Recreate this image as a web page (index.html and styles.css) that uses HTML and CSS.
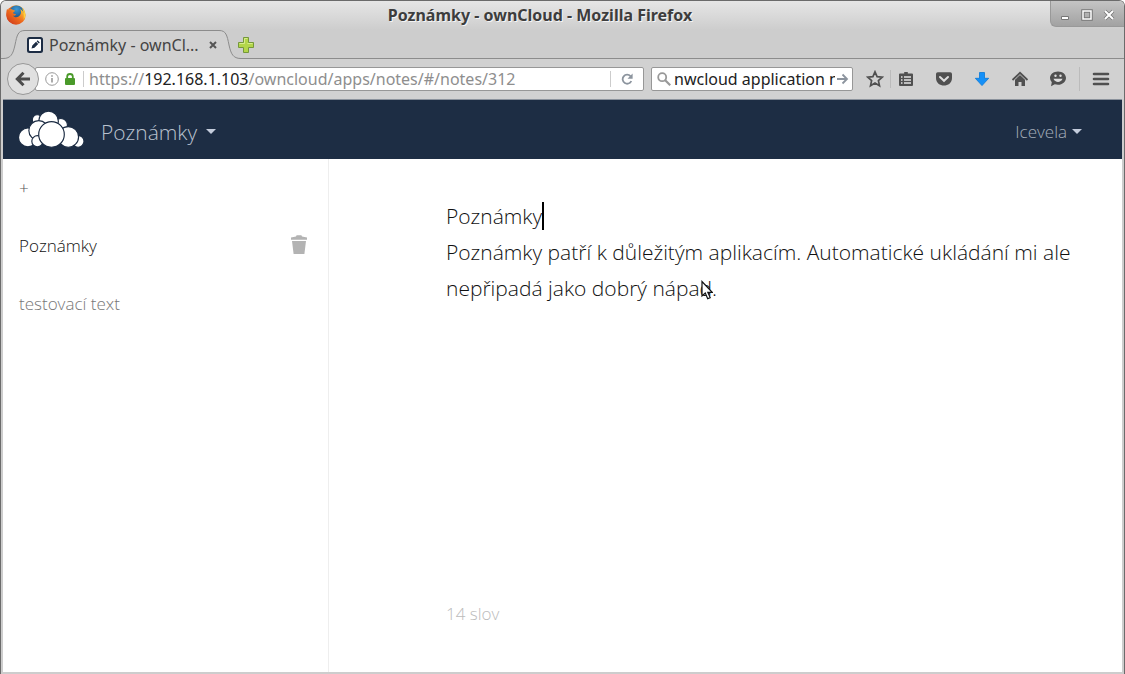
FILE: index.html
```html
<!DOCTYPE html>
<html lang="cs">
<head>
<meta charset="utf-8">
<title>Poznámky - ownCloud</title>
<link rel="stylesheet" href="styles.css">
</head>
<body>
<div class="window">
  <div class="titlebar">
    <svg class="firefox" viewBox="0 0 20 20" aria-hidden="true">
      <defs>
        <linearGradient id="flame" x1="0" y1="1" x2="1" y2="0"><stop offset="0" stop-color="#c9311c"/><stop offset=".5" stop-color="#ee6a1c"/><stop offset="1" stop-color="#ffd23a"/></linearGradient>
        <radialGradient id="globe" cx=".5" cy=".25" r=".8"><stop offset="0" stop-color="#3c9ad6"/><stop offset="1" stop-color="#123668"/></radialGradient>
      </defs>
      <circle cx="10" cy="10" r="9.7" fill="url(#flame)"/>
      <circle cx="10.500" cy="8" r="7.600" fill="url(#globe)"/>
      <path d="M1 4l1.500 1C4 3.500 6 4 7 5l2 .4c-.3 1.600-2 1.800-2 2.600 0 1 2 .8 3 1.200-.5 1.500-2 1.600-3 1.400 1 2 4 2.400 6 .6 2.500-2 2.500-5 1-7.200 4 2 5.500 6 3.500 10C15 19 8 21 3 16-.3 12.500 0 7 1 4z" fill="url(#flame)"/>
      <path d="M16 3c3.500 3 4.500 8 1.500 12 .5-3 .5-8-1.500-12z" fill="#ffd23a"/>
    </svg>
    <span class="window-title">Poznámky - ownCloud - Mozilla Firefox</span>
    <div class="window-controls">
      <button type="button" aria-label="Minimalizovat"><svg viewBox="0 0 12 12"><path d="M2.500 7.500h7v3h-7z" fill="#fff" stroke="#777"/></svg></button>
      <button type="button" aria-label="Maximalizovat"><svg viewBox="0 0 12 12"><path d="M2 2h8v8H2z" fill="none" stroke="#777" stroke-width="3.500"/><path d="M2 2h8v8H2z" fill="none" stroke="#fff" stroke-width="1.500"/></svg></button>
      <button type="button" aria-label="Zavřít"><svg viewBox="0 0 12 12"><path d="M2 2l8 8M10 2l-8 8" stroke="#777" stroke-width="3.600"/><path d="M2 2l8 8M10 2l-8 8" stroke="#fff" stroke-width="2"/></svg></button>
    </div>
  </div>

  <div class="tabs">
    <div class="tab">
      <svg class="tab-edge" viewBox="0 0 22 29" aria-hidden="true"><path d="M0 28.500C8 28.500 10 24 12 15C14 5 15 .5 22 .5V29H0z" fill="#d1d1d1"/><path d="M0 28.500C8 28.500 10 24 12 15C14 5 15 .5 22 .5" fill="none" stroke="#8c8c8c"/></svg>
      <div class="tab-body">
        <svg class="favicon" viewBox="0 0 16 16" aria-hidden="true"><rect width="16" height="16" rx="2.500" fill="#1d2d44"/><rect x="2" y="2" width="12" height="12" rx="1" fill="#fff"/><path d="M4.500 11.500l.8-3 3.700-3.700 2.200 2.200-3.700 3.700zM9.600 4.200l1-1 2.200 2.200-1 1z" fill="#1d2d44"/></svg>
        <span class="tab-label">Poznámky - ownCl...</span>
        <button type="button" class="tab-close" aria-label="Zavřít panel"><svg viewBox="0 0 8 8"><path d="M1 1l6 6M7 1L1 7" stroke="#555" stroke-width="2"/></svg></button>
      </div>
      <svg class="tab-edge" viewBox="0 0 22 29" aria-hidden="true"><path d="M0 .5C7 .5 8 5 10 15C12 24 14 28.500 22 28.500V29H0z" fill="#d1d1d1"/><path d="M0 .5C7 .5 8 5 10 15C12 24 14 28.500 22 28.500" fill="none" stroke="#8c8c8c"/></svg>
    </div>
    <button type="button" class="new-tab" aria-label="Nový panel"><svg viewBox="0 0 16 16"><path d="M5.500 .5h5v5h5v5h-5v5h-5v-5h-5v-5h5z" fill="#b3d64a" stroke="#75983a"/><path d="M6.500 1.500h3M1.500 6.500h5v-5M9.500 6.500h5" fill="none" stroke="#d7ed8c"/></svg></button>
  </div>

  <div class="toolbar">
    <button type="button" class="back" aria-label="Zpět"><svg viewBox="0 0 16 16"><path d="M15 8H3M8.500 1.800L2.300 8l6.200 6.200" fill="none" stroke="#4c4c4c" stroke-width="3"/></svg></button>
    <div class="address">
      <svg class="info" viewBox="0 0 14 14" aria-hidden="true"><circle cx="7" cy="7" r="6.300" fill="none" stroke="#999"/><path d="M7 6v4.500M7 3.200v1.500" stroke="#888" stroke-width="1.400"/></svg>
      <svg class="lock" viewBox="0 0 10 12" aria-hidden="true"><path d="M2.200 6V3.500a2.800 2.500 0 0 1 5.600 0V6" fill="none" stroke="#4a9a2a" stroke-width="1.800"/><rect y="5" width="10" height="7" rx="1" fill="#4a9a2a"/></svg>
      <div class="url" role="textbox" aria-label="Adresa" contenteditable="true" spellcheck="false">https://<span class="host">192.168.1.103</span>/owncloud/apps/notes/#/notes/312</div>
      <button type="button" class="reload" aria-label="Obnovit"><svg viewBox="0 0 12 12"><path d="M9.500 3.200A4.500 4.500 0 1 0 10.300 8" fill="none" stroke="#8c949e" stroke-width="1.800"/><path d="M11.600 .5v5.200H6.500z" fill="#8c949e"/></svg></button>
    </div>
    <div class="search">
      <svg class="lens" viewBox="0 0 14 14" aria-hidden="true"><circle cx="5.200" cy="5.200" r="4" fill="none" stroke="#999" stroke-width="1.800"/><path d="M8.200 8.200l5 5" stroke="#999" stroke-width="2.200"/></svg>
      <input type="text" aria-label="Hledat" value="nwcloud application n" spellcheck="false">
      <button type="button" class="go" aria-label="Vyhledat"><svg viewBox="0 0 12 12"><path d="M0 6h10M5.500 1.500L10 6l-4.500 4.500" fill="none" stroke="#8c949e" stroke-width="1.800"/></svg></button>
    </div>
    <div class="tools">
      <button type="button" class="star" aria-label="Záložka"><svg viewBox="0 0 18 18"><path d="M9 1.800l2.100 4.800 5.200.5-3.900 3.500 1.100 5.200L9 13.100l-4.500 2.700 1.100-5.200L1.700 7.100l5.200-.5z" fill="none" stroke="#505050" stroke-width="1.700"/></svg></button>
      <button type="button" class="list" aria-label="Záložky"><svg viewBox="0 0 18 18"><path d="M6 3.500h1.200v-1.500h3.600v1.500H15a1 1 0 0 1 1 1V15a1 1 0 0 1-1 1H3a1 1 0 0 1-1-1V4.500a1 1 0 0 1 1-1z" fill="#505050"/><path d="M4 7h1.500M4 10h1.500M4 13h1.500M7 7h7M7 10h7M7 13h7" stroke="#e2e2e2" stroke-width="1.500"/></svg></button>
      <button type="button" aria-label="Pocket"><svg viewBox="0 0 18 18"><path d="M1 4a1.800 1.800 0 0 1 1.800-1.800h12.400A1.800 1.800 0 0 1 17 4v4c0 10-16 10-16 0z" fill="#505050"/><path d="M5 7l4 3.800L13 7" fill="none" stroke="#ddd" stroke-width="2" stroke-linecap="round"/></svg></button>
      <button type="button" aria-label="Stahování"><svg viewBox="0 0 18 18"><path d="M6.500 2.500h5v5.800h4.200L9 15.600 2.300 8.300h4.200z" fill="#1590f8" stroke="#0879d8" stroke-width=".8"/></svg></button>
      <button type="button" aria-label="Domů"><svg viewBox="0 0 18 18"><path d="M1.500 10L9 2.800l7.500 7.200" fill="none" stroke="#505050" stroke-width="1.800"/><path d="M4 9.800L9 5l5 4.800V16h-3.500v-4h-3v4H4z" fill="#505050"/></svg></button>
      <button type="button" aria-label="Chat"><svg viewBox="0 0 18 18"><path d="M9 1.500c4.500 0 8 2.800 8 6.500s-3.500 6.800-8 6.800c-1.200 0-2.200-.2-3.200-.5L2 16.200l.8-3.900A6 6 0 0 1 1 8c0-3.700 3.500-6.500 8-6.500z" fill="#505050"/><path d="M4.500 8.800c1.500 4.200 7.500 4.200 9 0z" fill="#ddd"/><circle cx="6.500" cy="5.700" r="1.200" fill="#ddd"/><circle cx="11.500" cy="5.700" r="1.200" fill="#ddd"/></svg></button>
      <button type="button" class="menu" aria-label="Nabídka"><svg viewBox="0 0 18 18"><path d="M2 4h14M2 9h14M2 14h14" stroke="#505050" stroke-width="2.600" stroke-linecap="round"/></svg></button>
    </div>
  </div>

  <div class="page">
    <header class="app-header">
      <a href="#" class="logo" aria-label="ownCloud">
        <svg viewBox="0 0 66 37"><g fill="#fff" stroke="#1d2d44" stroke-width="1.200"><circle cx="18.500" cy="8.500" r="5"/><circle cx="42.500" cy="14" r="6.700"/><circle cx="30" cy="10" r="10"/><circle cx="9" cy="26.500" r="9.500"/><circle cx="20" cy="19.500" r="10"/><circle cx="60" cy="30.500" r="6"/><circle cx="50" cy="26" r="10.500"/><circle cx="18.700" cy="30.500" r="5.700"/><circle cx="33" cy="23.500" r="13"/></g></svg>
      </a>
      <button type="button" class="app-menu">Poznámky<span class="caret"></span></button>
      <button type="button" class="user-menu">Icevela<span class="caret"></span></button>
    </header>
    <div class="content">
      <nav class="notes">
        <button type="button" class="add">+</button>
        <div class="note"><a href="#/notes/312" class="active">Poznámky</a><button type="button" class="trash" aria-label="Smazat"><svg viewBox="0 0 16 20"><path d="M0 2.500l5-1 .6-1.300h4.800l.6 1.300 5 1v2.300H0zM1 6h14l-1.600 13H2.600z" fill="#b3b3b3"/></svg></button></div>
        <div class="note"><a href="#/notes/311">testovací text</a></div>
      </nav>
      <main class="editor">
        <textarea aria-label="Text poznámky" spellcheck="false">Poznámky
Poznámky patří k důležitým aplikacím. Automatické ukládání mi ale nepřipadá jako dobrý nápad.</textarea>
        <span class="text-cursor"></span>
        <svg class="pointer" viewBox="0 0 12 20" aria-hidden="true"><path d="M1 1.500v14.500l3.300-3 2.400 5.700 2.500-1.100-2.400-5.300h4.400z" fill="#fff" stroke="#111" stroke-width="1.200"/></svg>
        <div class="word-count">14 slov</div>
      </main>
    </div>
  </div>
</div>
</body>
</html>
```

FILE: styles.css
```css
* { box-sizing: border-box; }

body {
  margin: 0;
  background: #fff;
  font-family: "Noto Sans", "Open Sans", sans-serif;
  font-size: 16px;
}

button {
  display: flex;
  align-items: center;
  justify-content: center;
  flex: none;
  margin: 0;
  padding: 0;
  border: 0;
  background: none;
  font: inherit;
}

svg { display: block; flex: none; }

.window {
  display: flex;
  flex-direction: column;
  min-height: 100vh;
  border: 1px solid #6b6b6b;
  border-bottom: 0;
  border-radius: 6px 6px 0 0;
  background: #cdcdcd;
  overflow: hidden;
}

.titlebar {
  display: flex;
  align-items: flex-start;
  height: 29px;
  background: linear-gradient(#e6e6e6, #cdcdcd);
}

.firefox { width: 20px; height: 20px; margin: 4px 0 0 5px; }

.window-title {
  flex: 1;
  padding-left: 4px;
  color: #3d3d3d;
  font-weight: 700;
  line-height: 28px;
  text-align: center;
  text-shadow: 1px 1px 0 #f4f4f4;
}

.window-controls {
  display: flex;
  align-items: center;
  gap: 10px;
  height: 26px;
  padding: 2px 9px 0 8px;
  border: 1px solid #999;
  border-top: 0;
  border-right: 0;
  border-bottom-left-radius: 6px;
  background: linear-gradient(#c4c4c4, #a2a2a2);
}

.window-controls svg { width: 12px; height: 12px; }

.tabs {
  display: flex;
  align-items: flex-end;
  height: 29px;
  padding-left: 2px;
  background: linear-gradient(#8c8c8c, #8c8c8c) bottom / 100% 1px no-repeat;
}

.tab { display: flex; }
.tab-edge { width: 22px; height: 29px; }

.tab-body {
  display: flex;
  align-items: center;
  width: 194px;
  height: 29px;
  padding: 0 2px;
  border-top: 1px solid #8c8c8c;
  background: #d1d1d1;
}

.favicon { width: 16px; height: 16px; margin-right: 6px; }
.tab-label { flex: 1; color: #444; white-space: nowrap; }
.tab-close { width: 8px; }
.tab-close svg { width: 8px; height: 8px; }
.new-tab { height: 29px; margin-left: -3px; }
.new-tab svg { width: 16px; height: 16px; }

.toolbar {
  display: flex;
  align-items: center;
  height: 40px;
  padding: 0 14px 0 6px;
  background: #d1d1d1;
}

.back {
  z-index: 1;
  width: 32px;
  height: 32px;
  border: 1px solid #979797;
  border-radius: 50%;
  background: #e0e0e0;
}
.back svg { width: 16px; height: 16px; }

.address,
.search {
  display: flex;
  align-items: center;
  height: 24px;
  border: 1px solid #979797;
  border-radius: 2px;
  background: #fff;
}

.address { flex: 1; min-width: 0; margin-left: -4px; }
.info { width: 14px; height: 14px; margin-left: 9px; }
.lock { width: 10px; height: 12px; margin: 0 8px 0 6px; }

.url {
  flex: 1;
  min-width: 0;
  padding-left: 5px;
  border-left: 1px solid #ccc;
  color: #8e8e8e;
  line-height: 16px;
  white-space: nowrap;
}
.host { color: #222; }

.reload { width: 33px; height: 16px; border-left: 1px solid #ccc; }
.reload svg { width: 12px; height: 12px; }

.search { width: 202px; margin-left: 7px; padding: 0 3px 0 5px; }
.lens { width: 14px; height: 14px; margin-right: 3px; }
.search input {
  flex: 1;
  width: 0;
  height: 22px;
  padding: 0;
  border: 0;
  background: none;
  color: #222;
  font: inherit;
}
.go { margin-left: 2px; }
.go svg { width: 12px; height: 12px; }

.tools { display: flex; align-items: center; gap: 20px; margin-left: 13px; }
.tools svg { width: 18px; height: 18px; }
.star { padding-right: 6px; border-right: 1px solid #bbb; }
.tools .list { margin-left: -14px; }
.tools .menu { height: 24px; margin-left: -8px; padding-left: 12px; border-left: 1px solid #bbb; }

.page {
  display: flex;
  flex-direction: column;
  flex: 1;
  margin: 0 2px 2px;
  background: #fff;
  font-family: "Open Sans", "Noto Sans", sans-serif;
  font-size: 17px;
  font-weight: 300;
}

.app-header {
  display: flex;
  align-items: center;
  height: 60px;
  padding: 0 40px 0 16px;
  border-top: 1px solid #8b929c;
  background: #1d2d44;
}

.logo svg { width: 65px; height: 37px; }
.caret { border: 5px solid transparent; border-top-color: #c4ccdc; border-bottom: 0; }

.app-menu { gap: 9px; margin: 4px 0 0 17px; color: #b9c1ce; font-size: 21px; }
.user-menu { gap: 5px; margin: 4px 0 0 auto; color: #a5adba; }

.content { display: flex; flex: 1; }

.notes {
  display: flex;
  flex-direction: column;
  flex: none;
  width: 326px;
  padding: 0 21px 0 16px;
  border-right: 1px solid #eee;
}

.add { justify-content: flex-start; height: 57px; color: #555; }
.note { display: flex; align-items: center; justify-content: space-between; height: 58px; }
.note a { color: #777; text-decoration: none; }
.note .active { color: #111; }
.trash svg { width: 16px; height: 20px; }

.editor {
  position: relative;
  display: flex;
  flex-direction: column;
  flex: 1;
  padding: 39px 44px 44px 117px;
}

.editor textarea {
  flex: 1;
  width: 100%;
  padding: 0;
  border: 0;
  outline: 0;
  background: none;
  color: #111;
  font: inherit;
  font-size: 21px;
  line-height: 36px;
  resize: none;
  overflow: hidden;
}

.text-cursor { position: absolute; top: 43px; left: 213px; width: 2px; height: 28px; background: #000; }
.pointer { position: absolute; top: 121px; left: 372px; width: 12px; height: 20px; }
.word-count { color: #bbb; line-height: 28px; }
```
